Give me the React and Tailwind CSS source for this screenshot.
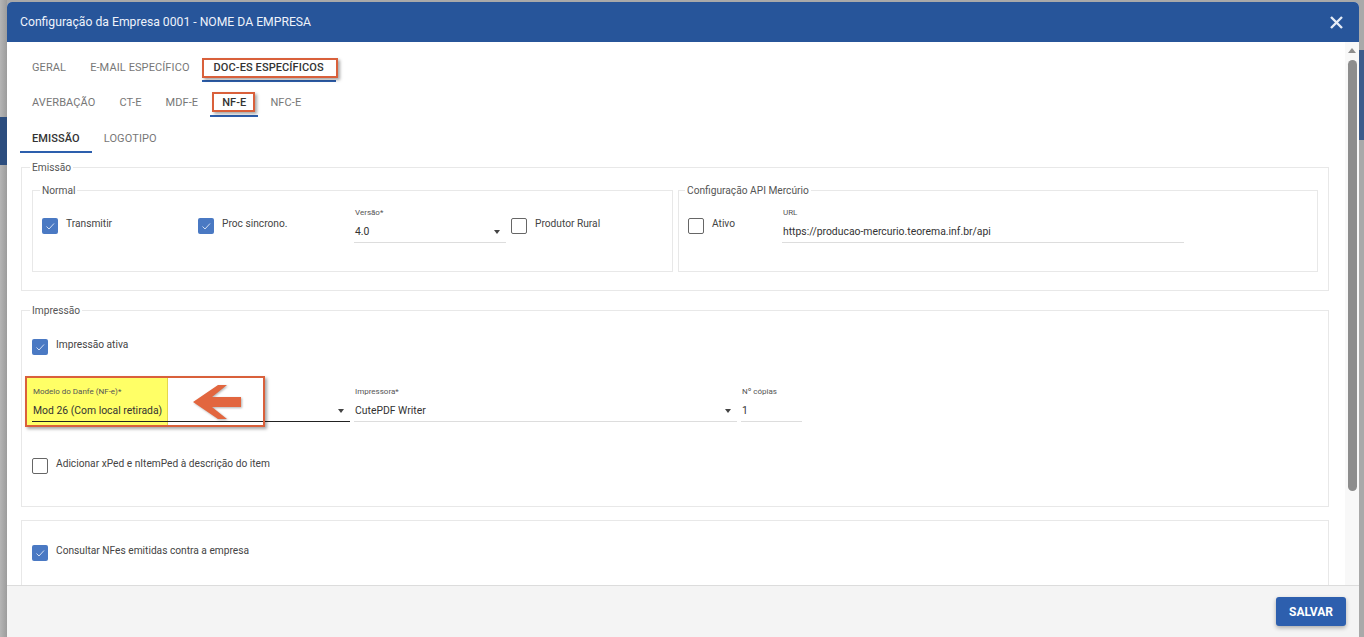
import React from "react";

const Check = ({ checked }) =>
  checked ? (
    <span className="w-4 h-4 rounded-[2px] bg-[#4a79c3] flex items-center justify-center shrink-0">
      <svg width="12" height="12" viewBox="0 0 12 12">
        <path d="M2.5 6.5 L5 9 L10 3.5" fill="none" stroke="#dfe8f7" strokeWidth="0.9" />
      </svg>
    </span>
  ) : (
    <span className="w-4 h-4 rounded-[2px] border border-[#666] bg-white shrink-0" />
  );

const CheckItem = ({ checked, label, className = "" }) => (
  <div className={`flex items-start gap-2 ${className}`}>
    <Check checked={checked} />
    <span className="-mt-[1px] text-[10.2px] text-[#444] leading-[14px]">{label}</span>
  </div>
);

const Caret = () => (
  <span className="w-0 h-0 border-l-[3.5px] border-r-[3.5px] border-t-[4px] border-l-transparent border-r-transparent border-t-[#444]" />
);

const Field = ({ label, value, className = "", dark, caret, h = "h-[25px]" }) => (
  <div className={className}>
    <div className="text-[8px] leading-[10px] text-[#555] pl-[1px]">{label}</div>
    <div
      className={`${h} flex items-center justify-between pt-[3px] pr-[6px] border-b ${
        dark ? "border-[#222]" : "border-[#ddd]"
      }`}
    >
      <span className="text-[10.4px] text-[#333] pl-[1px]">{value}</span>
      {caret && <Caret />}
    </div>
  </div>
);

const Tab = ({ label, active, boxed, boxClass = "" }) => (
  <div
    className={`relative h-[26px] px-3 flex items-center border-b-2 text-[11px] tracking-[0.1px] ${
      active ? "border-[#2d5fad] text-[#333] font-medium" : "border-transparent text-[#777]"
    }`}
  >
    {label}
    {boxed && (
      <span
        className={`absolute border-2 border-[#d9603b] shadow-[2px_2px_3px_rgba(0,0,0,0.35)] ${boxClass}`}
      />
    )}
  </div>
);

const Legend = ({ children }) => (
  <legend className="-ml-[2px] px-[2px] text-[10.2px] leading-[13px] text-[#555]">{children}</legend>
);

export default function App() {
  return (
    <div className="w-[1364px] h-[637px] flex bg-[#a9a9a9] overflow-hidden font-['Roboto',sans-serif]">
      <div className="w-[7px] flex flex-col bg-gradient-to-r from-[#b5b5b5] to-[#9c9c9c]">
        <div className="h-[117px]" />
        <div className="h-[48px] bg-[#2c4d7e]" />
      </div>

      <div className="w-[1352px] pt-[2px] flex flex-col">
        <div className="h-[635px] flex flex-col bg-white rounded-t-[5px] overflow-hidden">
          <div className="h-[40px] shrink-0 bg-[#27559a] flex items-center justify-between pl-[13px] pr-[16px]">
            <span className="text-[12.2px] text-[#eef2fa]">
              Configuração da Empresa 0001 - NOME DA EMPRESA
            </span>
            <svg width="13" height="13" viewBox="0 0 13 13">
              <path d="M1 1 L12 12 M12 1 L1 12" stroke="#e6ecf6" strokeWidth="2.4" />
            </svg>
          </div>

          <div className="h-[543px] shrink-0 flex">
            <div className="flex-1 overflow-hidden pl-[13px] pr-[16px]">
              <div className="flex mt-[14px]">
                <Tab label="GERAL" />
                <Tab label="E-MAIL ESPECÍFICO" />
                <Tab label="DOC-ES ESPECÍFICOS" active boxed boxClass="left-0 top-[2px] w-[136px] h-[20px]" />
              </div>
              <div className="flex mt-[9px]">
                <Tab label="AVERBAÇÃO" />
                <Tab label="CT-E" />
                <Tab label="MDF-E" />
                <Tab label="NF-E" active boxed boxClass="left-[2px] top-[1px] w-[43px] h-[20px]" />
                <Tab label="NFC-E" />
              </div>
              <div className="flex mt-[10px]">
                <Tab label="EMISSÃO" active />
                <Tab label="LOGOTIPO" />
              </div>

              <fieldset className="ml-[1px] mt-[8px] border border-[#e8e8e8] px-[10px] pb-[18px]">
                <Legend>Emissão</Legend>
                <div className="flex gap-[5px] mt-[10px]">
                  <fieldset className="flex-1 border border-[#e8e8e8] pl-[9px] pb-[28px]">
                    <Legend>Normal</Legend>
                    <div className="flex items-start mt-[11px]">
                      <CheckItem checked label="Transmitir" className="w-[156px] pt-[10px]" />
                      <CheckItem checked label="Proc sincrono." className="w-[156px] pt-[10px]" />
                      <Field label="Versão*" value="4.0" caret className="w-[152px]" />
                      <CheckItem label="Produtor Rural" className="ml-[5px] pt-[10px]" />
                    </div>
                  </fieldset>
                  <fieldset className="flex-1 border border-[#e8e8e8] pl-[8px] pb-[28px]">
                    <Legend>Configuração API Mercúrio</Legend>
                    <div className="flex items-start mt-[11px] pl-[1px]">
                      <CheckItem label="Ativo" className="w-[94px] pt-[10px]" />
                      <Field
                        label="URL"
                        value="https://producao-mercurio.teorema.inf.br/api"
                        className="w-[402px]"
                      />
                    </div>
                  </fieldset>
                </div>
              </fieldset>

              <fieldset className="ml-[1px] mt-[13px] border border-[#e8e8e8] px-[10px] pb-[32px]">
                <Legend>Impressão</Legend>
                <CheckItem checked label="Impressão ativa" className="mt-[22px]" />
                <div className="flex gap-[4px] mt-[32px]">
                  <div className="relative isolate w-[318px]">
                    <span className="absolute -left-[5px] -top-[9px] w-[141px] h-[47px] bg-[#ffff66] border-r border-[#e5d84a] -z-10" />
                    <Field label="Modelo do Danfe (NF-e)*" value="Mod 26 (Com local retirada)" caret dark />
                    <span className="absolute -left-[7px] -top-[11px] w-[240px] h-[51px] border-2 border-[#d9603b] shadow-[2px_2px_3px_rgba(0,0,0,0.35)]" />
                    <svg
                      className="absolute left-[158px] -top-[4px] drop-shadow-[1px_1px_1px_rgba(0,0,0,0.3)]"
                      width="54"
                      height="40"
                      viewBox="0 0 54 40"
                    >
                      <polygon
                        points="3,19 28,2 37,2 22,14 51,14 51,24 22,24 37,36 28,36"
                        fill="#e2663f"
                      />
                    </svg>
                  </div>
                  <Field label="Impressora*" value="CutePDF Writer" caret className="w-[383px]" />
                  <Field label="Nº cópias" value="1" className="w-[61px]" />
                </div>
                <CheckItem label="Adicionar xPed e nItemPed à descrição do item" className="mt-[36px]" />
              </fieldset>

              <div className="ml-[1px] mt-[13px] border border-[#e8e8e8] px-[10px] pt-[24px] pb-[40px]">
                <CheckItem checked label="Consultar NFes emitidas contra a empresa" />
              </div>
            </div>

            <div className="w-[14px] bg-[#f8f8f8] flex flex-col items-center pt-[6px]">
              <span className="w-0 h-0 border-l-[4.5px] border-r-[4.5px] border-b-[5px] border-l-transparent border-r-transparent border-b-[#8d8d8d]" />
              <span className="mt-[7px] w-[9px] h-[431px] rounded-full bg-[#8d8d8d]" />
            </div>
          </div>

          <div className="h-[52px] shrink-0 border-t border-[#dcdcdc] bg-[#f4f4f4] flex items-center justify-end pr-[13px]">
            <button className="w-[70px] h-[29px] rounded-[3px] bg-[#2d5fae] text-white text-[12px] font-bold shadow-[0_2px_4px_rgba(0,0,0,0.3)]">
              SALVAR
            </button>
          </div>
        </div>
      </div>

      <div className="w-[5px] flex flex-col">
        <div className="h-[50px]" />
        <div className="h-[90px] bg-[#3c5b8b]" />
      </div>
    </div>
  );
}
